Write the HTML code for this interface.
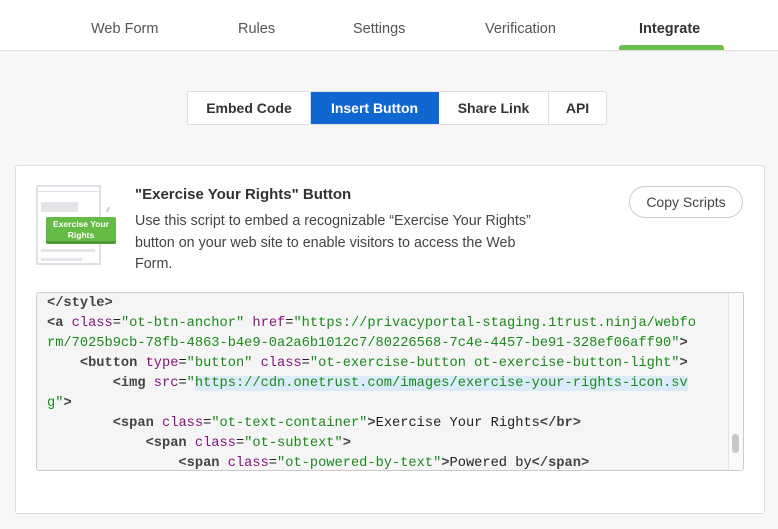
<!DOCTYPE html>
<html><head><meta charset="utf-8"><style>
*{box-sizing:border-box;margin:0;padding:0}
body{width:778px;height:529px;overflow:hidden;background:#f7f7f7;font-family:"Liberation Sans",sans-serif;color:#333;position:relative}
.hdr{position:absolute;left:0;top:0;width:778px;height:51px;background:#fff;border-bottom:1px solid #ddd}
.tab{position:absolute;top:21px;font-size:14.5px;color:#555}
.ul{position:absolute;left:619px;top:45px;width:105px;height:5px;background:#6cc04a;border-radius:3px 3px 0 0}
.seg{position:absolute;left:187px;top:91px;height:34px;border:1px solid #ddd;border-radius:3px;background:#fff;display:flex;overflow:hidden}
.seg div{height:32px;line-height:32px;font-size:14px;font-weight:bold;color:#333;text-align:center;border-right:1px solid #ddd}
.seg div:last-child{border-right:none}
.card{position:absolute;left:15px;top:165px;width:750px;height:349px;background:#fff;border:1px solid #ddd;border-radius:3px}
.title{position:absolute;left:135px;top:186px;font-size:15px;font-weight:bold;color:#333}
.desc{position:absolute;left:135px;top:211px;width:405px;font-size:14.3px;line-height:21.5px;color:#444}
.btn{position:absolute;left:629px;top:186px;width:114px;height:32px;border:1px solid #ccc;border-radius:16px;font-size:14px;color:#444;text-align:center;line-height:30px;background:#fff}
.code{position:absolute;left:36px;top:292px;width:708px;height:179px;background:#f5f5f5;border:1px solid #ccc;border-radius:3px;overflow:hidden}
pre{position:absolute;left:10px;top:1px;font-family:"Liberation Mono",monospace;font-size:13.7px;line-height:20px;color:#222}
.t{color:#444;font-weight:bold}.a{color:#881280}.v{color:#1a8a1a}
.hl{background:#dcebfa}
.sb{position:absolute;right:0;top:0;width:15px;height:100%;border-left:1px solid #e4e4e4;background:#fafafa}
.th{position:absolute;left:3px;top:141px;width:7px;height:19px;border-radius:4px;background:#c8c8c8}
</style></head><body>
<div class="hdr">
<span class="tab" style="left:91px">Web Form</span>
<span class="tab" style="left:238px">Rules</span>
<span class="tab" style="left:353px">Settings</span>
<span class="tab" style="left:485px">Verification</span>
<span class="tab" style="left:639px;font-weight:bold;color:#333">Integrate</span>
<div class="ul"></div>
</div>
<div class="seg">
<div style="width:123px">Embed Code</div>
<div style="width:128px;background:#1067cf;color:#fff;border-right-color:#1067cf">Insert Button</div>
<div style="width:110px">Share Link</div>
<div style="width:57px">API</div>
</div>
<div class="card"></div>
<div style="position:absolute;left:36px;top:185px;width:65px;height:80px;border:2px solid #dde0e4;background:#fff"></div>
<div style="position:absolute;left:38px;top:187px;width:61px;height:5px;border-bottom:1px solid #dde0e4"></div>
<div style="position:absolute;left:41px;top:202px;width:37px;height:10px;background:#e3e5e8"></div>
<div style="position:absolute;left:41px;top:249px;width:54px;height:3px;background:#e3e5e8"></div>
<div style="position:absolute;left:41px;top:258px;width:41px;height:3px;background:#e3e5e8"></div>
<div style="position:absolute;left:46px;top:217px;width:70px;height:27px;background:#66bb47;border-bottom:3px solid #4f9a34;border-radius:2px;color:#fff;font-size:8.5px;font-weight:bold;text-align:center;line-height:11px;padding-top:2px">Exercise Your<br>Rights</div>
<div style="position:absolute;left:107px;top:207px;width:6px;height:5px;border-left:2px solid #ccc;transform:skewX(-20deg)"></div>
<div class="title">"Exercise Your Rights" Button</div>
<div class="desc">Use this script to embed a recognizable “Exercise Your Rights” button on your web site to enable visitors to access the Web Form.</div>
<div class="btn">Copy Scripts</div>
<div class="code">
<pre><span class="t">&lt;/style&gt;</span>
<span class="t">&lt;a</span> <span class="a">class</span>=<span class="v">"ot-btn-anchor"</span> <span class="a">href</span>=<span class="v">"https://privacyportal-staging.1trust.ninja/webfo</span>
<span class="v">rm/7025b9cb-78fb-4863-b4e9-0a2a6b1012c7/80226568-7c4e-4457-be91-328ef06aff90"</span><span class="t">&gt;</span>
    <span class="t">&lt;button</span> <span class="a">type</span>=<span class="v">"button"</span> <span class="a">class</span>=<span class="v">"ot-exercise-button ot-exercise-button-light"</span><span class="t">&gt;</span>
        <span class="t">&lt;img</span> <span class="a">src</span>=<span class="v">"</span><span class="v hl">https://cdn.onetrust.com/images/exercise-your-rights-icon.sv</span>
<span class="v">g"</span><span class="t">&gt;</span>
        <span class="t">&lt;span</span> <span class="a">class</span>=<span class="v">"ot-text-container"</span><span class="t">&gt;</span>Exercise Your Rights<span class="t">&lt;/br&gt;</span>
            <span class="t">&lt;span</span> <span class="a">class</span>=<span class="v">"ot-subtext"</span><span class="t">&gt;</span>
                <span class="t">&lt;span</span> <span class="a">class</span>=<span class="v">"ot-powered-by-text"</span><span class="t">&gt;</span>Powered by<span class="t">&lt;/span&gt;</span></pre>
<div class="sb"><div class="th"></div></div>
</div>
</body></html>
